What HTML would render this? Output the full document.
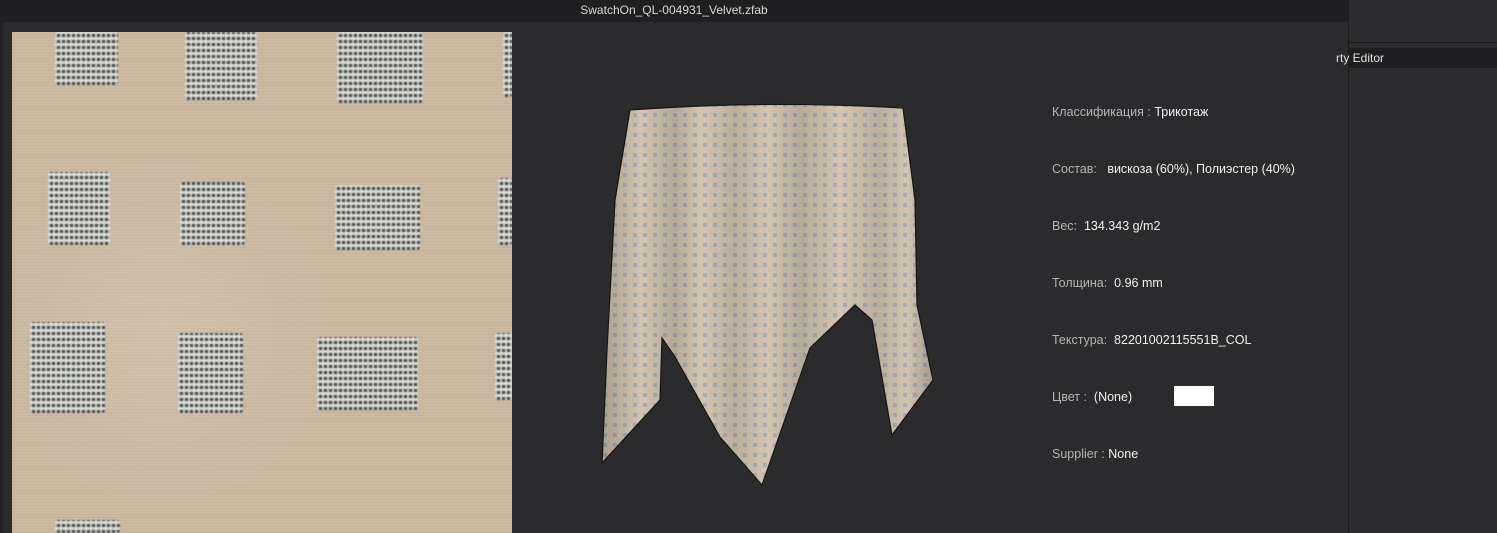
<!DOCTYPE html>
<html><head><meta charset="utf-8"><style>
*{margin:0;padding:0;box-sizing:border-box}
body{width:1497px;height:533px;background:#2b2b2d;position:relative;overflow:hidden;font-family:"Liberation Sans",sans-serif}
.title{position:absolute;left:0;top:0;width:1348px;height:22px;background:#1f1f21;color:#d8d8d8;font-size:12px;text-align:center;line-height:21px}
.rp{position:absolute;left:1348px;top:0;width:149px;height:533px;background:#2d2d2f;border-left:1px solid #1a1a1a}
.rp .hl{position:absolute;left:0;top:42px;width:149px;height:1px;background:#1a1a1a}
.rp .bar{position:absolute;left:0;top:48px;width:149px;height:20px;background:#1f1f21}
.pe{position:absolute;left:1336px;top:51px;color:#e0e0e0;font-size:12px}
.leftedge{position:absolute;left:0;top:22px;width:3px;height:511px;background:#232325}
.sw{position:absolute;left:12px;top:32px;width:500px;height:501px;background:
radial-gradient(circle at 30% 60%,rgba(255,255,255,.12),transparent 40%),
repeating-linear-gradient(0deg,rgba(0,0,0,.03) 0 1px,transparent 1px 3px),#cbb9a1;overflow:hidden}
.sq{position:absolute;background:
repeating-linear-gradient(90deg,rgba(235,235,230,.75) 0 2px,transparent 2px 5px),
repeating-linear-gradient(0deg,#34424a 0 3px,#d8d6d0 3px 6px);opacity:.85;filter:blur(.4px);border-radius:3px}
.info{position:absolute;left:1052px;font-size:12.5px;color:#b4b4b4}
.info b{font-weight:normal;color:#f0f0f0}
</style></head><body>
<div class="title">SwatchOn_QL-004931_Velvet.zfab</div>
<div class="leftedge"></div>
<div class="sw">
<div class="sq" style="left:43px;top:0;width:63px;height:53px"></div>
<div class="sq" style="left:173px;top:0;width:72px;height:68px"></div>
<div class="sq" style="left:325px;top:0;width:86px;height:71px"></div>
<div class="sq" style="left:491px;top:0;width:9px;height:65px"></div>
<div class="sq" style="left:36px;top:140px;width:62px;height:73px"></div>
<div class="sq" style="left:168px;top:150px;width:65px;height:63px"></div>
<div class="sq" style="left:323px;top:153px;width:85px;height:65px"></div>
<div class="sq" style="left:486px;top:146px;width:14px;height:67px"></div>
<div class="sq" style="left:18px;top:290px;width:75px;height:91px"></div>
<div class="sq" style="left:166px;top:301px;width:65px;height:80px"></div>
<div class="sq" style="left:305px;top:305px;width:101px;height:73px"></div>
<div class="sq" style="left:483px;top:301px;width:17px;height:67px"></div>
<div class="sq" style="left:43px;top:488px;width:65px;height:13px"></div>
</div>
<svg style="position:absolute;left:0;top:0" width="1497" height="533">
<defs>
<pattern id="dots" width="10" height="10" patternUnits="userSpaceOnUse">
<rect width="10" height="10" fill="#d3c5b1"/>
<rect x="3" y="3" width="4" height="4" fill="#a9aeb2"/>
</pattern>
<linearGradient id="sh" x1="0" x2="1">
<stop offset="0" stop-color="#000" stop-opacity=".2"/>
<stop offset=".12" stop-color="#000" stop-opacity="0"/>
<stop offset=".22" stop-color="#000" stop-opacity=".15"/>
<stop offset=".3" stop-color="#000" stop-opacity="0"/>
<stop offset=".4" stop-color="#000" stop-opacity=".12"/>
<stop offset=".5" stop-color="#000" stop-opacity="0"/>
<stop offset=".6" stop-color="#000" stop-opacity=".14"/>
<stop offset=".72" stop-color="#000" stop-opacity="0"/>
<stop offset=".84" stop-color="#000" stop-opacity=".12"/>
<stop offset=".92" stop-color="#000" stop-opacity="0"/>
<stop offset="1" stop-color="#000" stop-opacity=".22"/>
</linearGradient>
</defs>
<path id="d" d="M630,110 Q765,100 903,108 L915,200 L917,305 L933,380 L892,435 L872,320 L855,305 L810,348 L762,485 L720,437 L675,357 L662,338 L660,400 L602,463 L607,350 L615,200 Z" fill="url(#dots)" stroke="#1a1612" stroke-width="1.2"/>
<path d="M630,110 Q765,100 903,108 L915,200 L917,305 L933,380 L892,435 L872,320 L855,305 L810,348 L762,485 L720,437 L675,357 L662,338 L660,400 L602,463 L607,350 L615,200 Z" fill="url(#sh)"/>
</svg>
<div class="info" style="top:105px">Классификация : <b>Трикотаж</b></div>
<div class="info" style="top:162px">Состав: &nbsp;&nbsp;<b>вискоза (60%), Полиэстер (40%)</b></div>
<div class="info" style="top:219px">Вес: &nbsp;<b>134.343 g/m2</b></div>
<div class="info" style="top:276px">Толщина: &nbsp;<b>0.96 mm</b></div>
<div class="info" style="top:333px">Текстура: &nbsp;<b>82201002115551B_COL</b></div>
<div class="info" style="top:390px">Цвет : &nbsp;<b>(None)</b></div>
<div style="position:absolute;left:1174px;top:386px;width:40px;height:20px;background:#fff"></div>
<div class="info" style="top:447px">Supplier : <b>None</b></div>
<div class="rp"><div class="hl"></div><div class="bar"></div></div>
<div class="pe">rty Editor</div>
</body></html>
